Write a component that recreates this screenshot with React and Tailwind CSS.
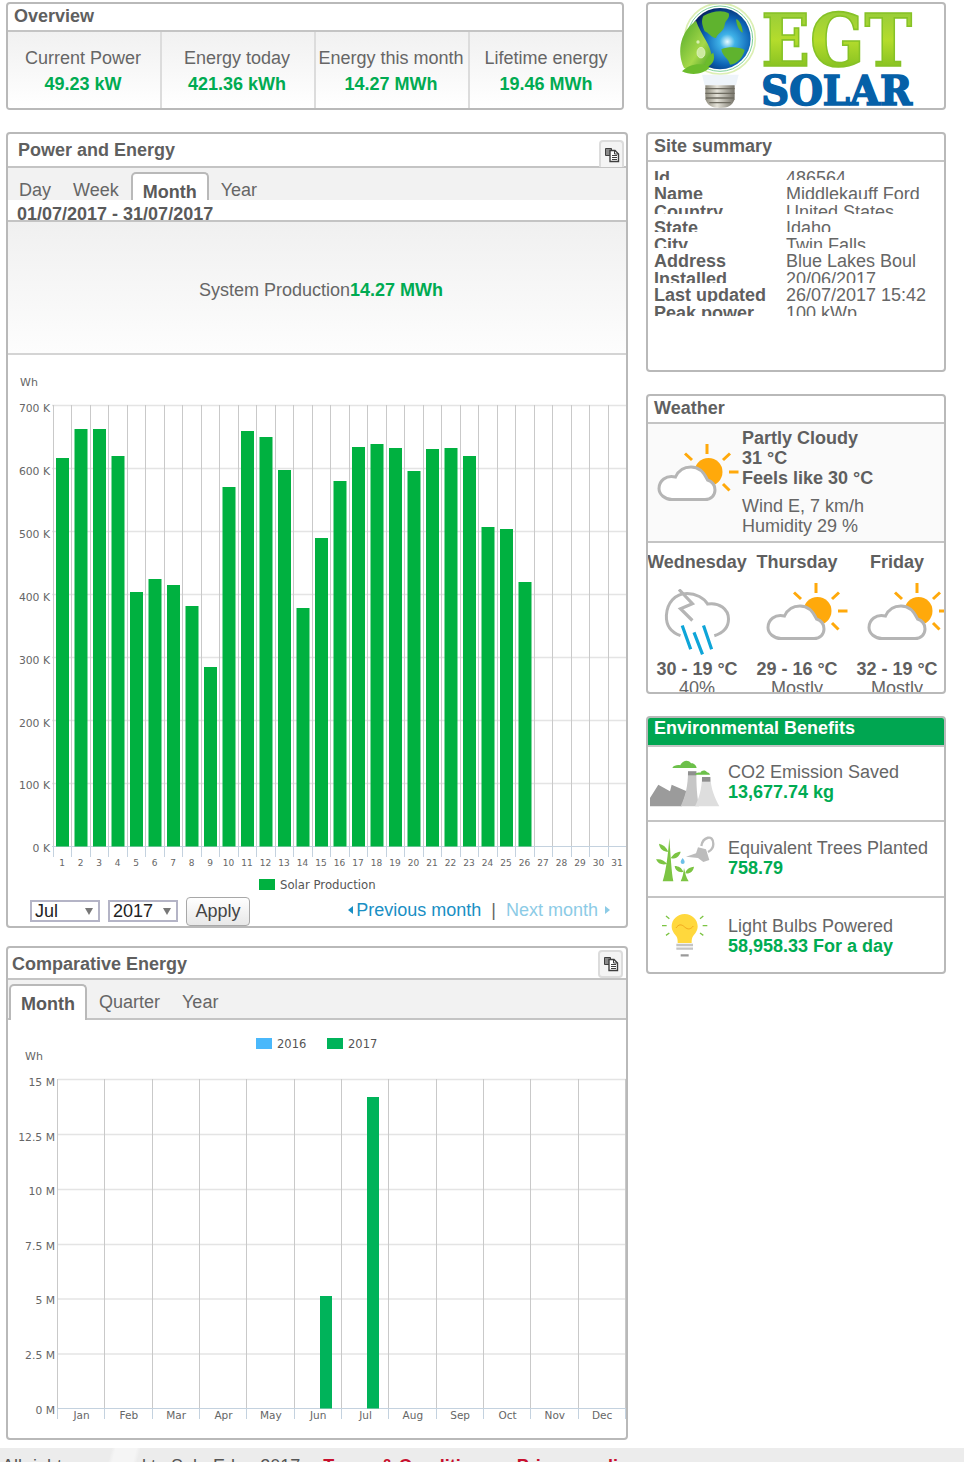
const dayBars = [458, 429, 429, 456, 592, 579, 585, 606, 667, 487, 431, 437, 470, 608, 538, 481, 447, 444, 448, 471, 449, 448, 456, 527, 529, 582];
const months = ['Jan', 'Feb', 'Mar', 'Apr', 'May', 'Jun', 'Jul', 'Aug', 'Sep', 'Oct', 'Nov', 'Dec'];

const stats = [
  { label: 'Current Power', value: '49.23 kW' },
  { label: 'Energy today', value: '421.36 kWh' },
  { label: 'Energy this month', value: '14.27 MWh' },
  { label: 'Lifetime energy', value: '19.46 MWh' },
];

const summary = [
  { label: 'Id', value: '486564', box: 'h-[11px] mb-[5px]' },
  { label: 'Name', value: 'Middlekauff Ford', box: 'h-[14px] mb-[4px]' },
  { label: 'Country', value: 'United States', box: 'h-[11px] mb-[5px]' },
  { label: 'State', value: 'Idaho', box: 'h-[13px] mb-[4px]' },
  { label: 'City', value: 'Twin Falls', box: 'h-[12px] mb-[4px]' },
  { label: 'Address', value: 'Blue Lakes Boul', box: 'h-[15px] mb-[3px]' },
  { label: 'Installed', value: '20/06/2017', box: 'h-[13px] mb-[3px]' },
  { label: 'Last updated', value: '26/07/2017 15:42', box: 'h-[16px] mb-[2px]' },
  { label: 'Peak power', value: '100 kWp', box: 'h-[12px]' },
];

function ExportButton({ className }) {
  return (
    <div className={`absolute flex w-[25px] items-center justify-center rounded-t-[4px] border-2 border-[#dcdcdc] bg-[#f4f4f4] ${className}`}>
      <svg width="16" height="16" viewBox="0 0 16 16" fill="none" stroke="#3f3f3f">
        <path d="M1.5 1.5h6v7h-6z" fill="#8a8a8a" />
        <path d="M6 3.5h5l3.5 3.5v7.5H6z" fill="#fff" strokeWidth="1.4" />
        <path d="M8 8.5h5M8 10.5h5M8 12.5h5M10.5 3.5v3.5h4" strokeWidth="1" />
      </svg>
    </div>
  );
}

function Panel({ className, children }) {
  return <div className={`relative overflow-hidden rounded-[4px] border-2 border-[#b9b9b9] bg-white ${className}`}>{children}</div>;
}

function Tabs({ items, active, className }) {
  return (
    <div className={`flex items-end bg-[#f2f2f2] text-[18px] text-[#666] ${className}`}>
      {items.map((tab) =>
        tab.name === active ? (
          <div key={tab.name} className={`rounded-t-[5px] border-2 border-b-0 border-[#b9b9b9] bg-white pl-[10px] pr-[10px] pt-[7px] font-bold leading-[22px] text-[#5a5a5a] ${tab.gap} ${tab.h}`}>
            {tab.name}
          </div>
        ) : (
          <div key={tab.name} className={`leading-[22px] ${tab.gap} ${tab.pb}`}>{tab.name}</div>
        )
      )}
    </div>
  );
}

function ProductionChart() {
  const hLines = [405.5, 468.5, 531.5, 594.5, 657.5, 720.5, 783.5];
  const vLines = Array.from({ length: 32 }, (_, i) => Math.round(52.5 + 18.5 * i) + 0.5);
  return (
    <svg className="block h-[540px] w-[618px]" viewBox="8 355 618 540" fontFamily="'DejaVu Sans', sans-serif">
      {hLines.map((y) => <line key={y} x1="52" x2="626" y1={y} y2={y} stroke="#e4e4e4" strokeWidth="1.3" />)}
      {vLines.map((x) => <line key={x} x1={x} x2={x} y1="405" y2="846" stroke="#c9c9c9" />)}
      {vLines.map((x) => <line key={x} x1={x} x2={x} y1="846" y2="857" stroke="#c4d2df" />)}
      <line x1="52" x2="626" y1="846.5" y2="846.5" stroke="#c4d2df" />
      {dayBars.map((top, i) => <rect key={i} x={56 + 18.5 * i} y={top} width="13" height={846.5 - top} fill="#00b140" />)}
      <text x="20" y="386" fontSize="11" fill="#666">Wh</text>
      {['700 K', '600 K', '500 K', '400 K', '300 K', '200 K', '100 K', '0 K'].map((t, i) => (
        <text key={t} x="50" y={412 + 62.9 * i} fontSize="10.8" fill="#666" textAnchor="end">{t}</text>
      ))}
      {Array.from({ length: 31 }, (_, i) => (
        <text key={i} x={62 + 18.5 * i} y="866" fontSize="9" fill="#666" textAnchor="middle">{i + 1}</text>
      ))}
      <rect x="259" y="879" width="16" height="11" fill="#00b140" />
      <text x="280" y="889" fontSize="11.7" fill="#555">Solar Production</text>
    </svg>
  );
}

function ComparativeChart() {
  const step = 47.33;
  const hLines = [1079.5, 1134.5, 1189.5, 1244.5, 1299, 1354];
  const vLines = Array.from({ length: 13 }, (_, i) => Math.round(58 + step * i) - 0.5);
  return (
    <svg className="block h-[418px] w-[618px]" viewBox="8 1020 618 418" fontFamily="'DejaVu Sans', sans-serif">
      {hLines.map((y) => <line key={y} x1="58" x2="626" y1={y} y2={y} stroke="#e4e4e4" strokeWidth="1.3" />)}
      {vLines.map((x) => <line key={x} x1={x} x2={x} y1="1079" y2="1408" stroke="#c9c9c9" />)}
      {vLines.map((x) => <line key={x} x1={x} x2={x} y1="1408" y2="1419" stroke="#c4d2df" />)}
      <line x1="58" x2="626" y1="1408.5" y2="1408.5" stroke="#c4d2df" />
      <rect x="320" y="1296" width="12" height="112.5" fill="#00b35a" />
      <rect x="367" y="1097" width="12" height="311.5" fill="#00b35a" />
      <rect x="256" y="1038" width="16" height="11" fill="#4ab8fb" />
      <text x="277" y="1048" fontSize="11.5" fill="#555">2016</text>
      <rect x="327" y="1038" width="16" height="11" fill="#00b35a" />
      <text x="348" y="1048" fontSize="11.5" fill="#555">2017</text>
      <text x="25" y="1060" fontSize="11" fill="#666">Wh</text>
      {['15 M', '12.5 M', '10 M', '7.5 M', '5 M', '2.5 M', '0 M'].map((t, i) => (
        <text key={t} x="55" y={1086 + 54.6 * i} fontSize="10.8" fill="#666" textAnchor="end">{t}</text>
      ))}
      {months.map((m, i) => (
        <text key={m} x={81.5 + step * i} y="1419" fontSize="10.5" fill="#666" textAnchor="middle">{m}</text>
      ))}
    </svg>
  );
}

function Logo() {
  return (
    <svg className="block h-[104px] w-[296px]" viewBox="24 12 888 312">
      <defs>
        <radialGradient id="globe" cx="0.62" cy="0.55" r="0.62">
          <stop offset="0" stopColor="#e8fbff" />
          <stop offset="0.2" stopColor="#3fb2e8" />
          <stop offset="0.62" stopColor="#0c62b4" />
          <stop offset="1" stopColor="#051f5c" />
        </radialGradient>
        <linearGradient id="egt" x1="0" x2="0" y1="0" y2="1">
          <stop offset="0" stopColor="#8cc63f" />
          <stop offset="0.5" stopColor="#b4dc2c" />
          <stop offset="1" stopColor="#6fb31c" />
        </linearGradient>
        <linearGradient id="leaf" x1="0" x2="1" y1="0" y2="1">
          <stop offset="0" stopColor="#4fa828" />
          <stop offset="0.6" stopColor="#a6d94a" />
          <stop offset="1" stopColor="#3d9a22" />
        </linearGradient>
        <linearGradient id="screw" x1="0" x2="1" y1="0" y2="0">
          <stop offset="0" stopColor="#8d8a7c" />
          <stop offset="0.4" stopColor="#e4e2d8" />
          <stop offset="1" stopColor="#77746a" />
        </linearGradient>
      </defs>
      <path d="M186 224h110l-8 32h-94z" fill="#eef4fa" />
      <path d="M196 256h88v42c-8 20-20 26-44 26s-36-6-44-26z" fill="url(#screw)" />
      <path d="M196 266h88M196 280h88M198 294h84M208 308h64" stroke="#6e6b60" strokeWidth="4" />
      <circle cx="240" cy="116" r="106" fill="none" stroke="#dcefb4" strokeWidth="5" />
      <circle cx="240" cy="116" r="98" fill="#fff" stroke="#7ccf9a" strokeWidth="3" />
      <circle cx="240" cy="116" r="92" fill="url(#globe)" />
      <path d="M190 48c24-14 58-20 76-8 6 14-10 20-12 34-2 22-20 22-26 40-14 0-22-16-34-20-6-16-12-30-4-46zM244 148c24-10 56-6 70 2-6 24-22 42-44 44-4-18-24-26-26-46zM288 58c10 0 20 22 20 40-10-4-18-20-20-40z" fill="#5fb32e" />
      <path d="M168 62C124 92 108 150 132 204c40 14 82 4 84-30-2-40-34-70-48-112z" fill="url(#leaf)" />
      <ellipse cx="183" cy="158" rx="12" ry="16" fill="#cdeaa0" stroke="#e9f7d2" strokeWidth="2" />
      <circle cx="174" cy="126" r="5" fill="#d8f0b0" />
      <path d="M126 214c22-22 58-28 84-12-20 22-56 26-84 12zM196 204c-4-20 6-34 24-46 6 20 0 36-24 46z" fill="#6cbc2c" />
      <text x="364" y="197" fontFamily="'DejaVu Serif', serif" fontWeight="700" fontSize="216" textLength="452" lengthAdjust="spacingAndGlyphs" fill="url(#egt)" stroke="#86c226" strokeWidth="5">EGT</text>
      <text x="364" y="315" fontFamily="'DejaVu Serif', serif" fontWeight="700" fontSize="124" textLength="452" lengthAdjust="spacingAndGlyphs" fill="#0560a8" stroke="#0560a8" strokeWidth="5">SOLAR</text>
    </svg>
  );
}

function PartlyCloudy({ className }) {
  return (
    <svg className={`block h-[60px] w-[84px] shrink-0 ${className}`} viewBox="0 0 84 60" fill="none">
      <circle cx="52.5" cy="29" r="14" fill="#ffa90b" />
      <path d="M51 1v10M29 10.5l7 6.5M74 10.5l-7 6.5M73 29h9.500M67 41l6.500 6.500" stroke="#ffa90b" strokeWidth="3" />
      <path d="M16 56.500H49c6 0 10-4 10-9.500 0-5-3-8.500-7.500-10C48 29 42 24 35 24c-8 0-13 4.500-15.500 10C10 31.500 3 38 3 45.500 3 51.500 9 56.500 16 56.500z" fill="#fff" stroke="#b5b5b5" strokeWidth="3" />
    </svg>
  );
}

function StormCloud() {
  return (
    <svg className="block h-[70px] w-[75px] shrink-0" viewBox="0 0 75 70" fill="none">
      <path d="M20.500 46.700C10 43 6 35 6.400 26.400 7 14 15 4.500 27 4.500c9 0 17 4.500 20.600 10.500C59 13 68.500 20 68.500 30c0 8-5.500 14-14.200 16.700" stroke="#b5b5b5" strokeWidth="3" />
      <path d="M19 .5 32.400 14.600 20.500 19.700 32.400 31.500" stroke="#b5b5b5" strokeWidth="3.200" />
      <path d="M22.200 36.500 30.700 60.200M34 43.300 42.500 65.300M43.500 36.500 51.600 60.200" stroke="#0ea5d8" strokeWidth="3.200" />
    </svg>
  );
}

function FactoryIcon() {
  return (
    <svg className="block h-[60px] w-[80px] shrink-0" viewBox="24 130 240 180">
      <path d="M30 290v-25l25-40 35 20 5-20 45 20-15 45z" fill="#9b9b9b" />
      <path d="M122 290c14-30 22-60 22-105h25c0 45 2 75 8 105z" fill="#c6c6c6" />
      <path d="M144 185h25v12h-25z" fill="#8f8f8f" />
      <path d="M165 290c12-25 20-50 21-88h25c2 38 14 63 27 88z" fill="#dedede" />
      <path d="M186 202h25v14h-25z" fill="#8f8f8f" />
      <path d="M97 175c4-8 16-10 24-8 4-12 22-20 32-6 8-2 16 6 17 14zM165 195c2-6 10-8 16-6 4-8 16-8 20-1 4 0 8 3 9 7z" fill="#6cc04a" />
    </svg>
  );
}

function TreeIcon() {
  return (
    <svg className="block h-[60px] w-[80px] shrink-0" viewBox="24 360 240 180">
      <path d="M68 514c10-30 16-80 20-130 4 50 6 100 12 130z" fill="#7cc443" />
      <path d="M85 425c-6-14-16-22-28-24 2 16 14 24 28 24zM92 445c8-14 18-20 30-20-4 16-16 22-30 20zM82 462c-10-12-20-16-34-14 6 14 18 18 34 14zM122 514c6-12 8-24 10-40 4 16 6 28 14 40z" fill="#7cc443" />
      <path d="M130 486c-4-12-14-18-26-18 2 14 12 20 26 18zM136 490c2-12 12-18 26-20-2 14-12 22-26 20z" fill="#7cc443" />
      <path d="M138 440l30-10 6-18 24 6 10 32-18 6-16-12z" fill="#bcbcbc" />
      <path d="M184 408c4-26 36-38 36-6 0 14-8 20-16 24" fill="none" stroke="#bcbcbc" strokeWidth="7" />
      <path d="M128 444c-5 7-6 10-6 12a6 6 0 0 0 12 0c0-2-1-5-6-12z" fill="#6cc0e8" />
    </svg>
  );
}

function BulbIcon() {
  return (
    <svg className="block h-[60px] w-[80px] shrink-0" viewBox="24 590 240 180" fill="none">
      <path d="M134 608c-22 0-39 17-39 37 0 14 8 22 14 30 4 6 4 14 4 20h42c0-6 0-14 4-20 6-8 14-16 14-30 0-20-17-37-39-37z" fill="#ffd83d" />
      <path d="M108 650c8-12 16-12 26-3s18 7 26-3" stroke="#f3a91e" strokeWidth="3" />
      <path d="M109 701h50M109 712h50" stroke="#c4c4c4" strokeWidth="7" />
      <path d="M122 732h24" stroke="#9a9a9a" strokeWidth="7" />
      <path d="M66 643h14M188 643h14M78 614l10 8M190 614l-10 8M78 672l10-7M190 672l-10-7" stroke="#7cc443" strokeWidth="4" />
    </svg>
  );
}

function Stat({ label, value, last }) {
  return (
    <div className={`pt-[15px] text-center ${last ? '' : 'border-r-2 border-[#dcdcdc] pr-[2px]'}`}>
      <div className="whitespace-nowrap text-[18px] leading-[22px] text-[#666]">{label}</div>
      <div className="mt-[4px] text-[18px] font-bold leading-[22px] text-[#00ab52]">{value}</div>
    </div>
  );
}

function Forecast({ day, temp, note, children, iconClass }) {
  return (
    <div className="flex w-[100px] shrink-0 flex-col items-center">
      <div className="text-[18px] font-bold leading-[20px] text-[#5f5f5f]">{day}</div>
      <div className={`h-[87px] self-start ${iconClass}`}>{children}</div>
      <div className="text-[18px] font-bold leading-[20px] text-[#5f5f5f]">{temp}</div>
      <div className="text-[18px] leading-[19px] text-[#666]">{note}</div>
    </div>
  );
}

function Benefit({ icon, label, value, box, textTop }) {
  return (
    <div className={`flex ${box}`}>
      {icon}
      <div className={textTop}>
        <div className="text-[18px] leading-[20px] text-[#666]">{label}</div>
        <div className="text-[18px] font-bold leading-[20px] text-[#00ab52]">{value}</div>
      </div>
    </div>
  );
}

export default function App() {
  return (
    <div className="h-[1462px] overflow-hidden bg-white font-['Liberation_Sans',Arial,sans-serif]">
      <div className="flex pl-[6px] pt-[2px]">
        {/* left column */}
        <div className="w-[622px]">
          <Panel className="h-[108px] w-[618px]">
            <div className="h-[28px] border-b-2 border-[#c4c4c4] pl-[6px] text-[18px] font-bold leading-[25px] text-[#5f5f5f]">Overview</div>
            <div className="grid h-[76px] grid-cols-[154px_154px_154px_152px] bg-linear-to-b from-[#f1f1f1] to-white">
              {stats.map((s, i) => <Stat key={s.label} {...s} last={i === 3} />)}
            </div>
          </Panel>

          <Panel className="mt-[22px] h-[796px]">
            <div className="h-[34px] border-b-2 border-[#c4c4c4] pl-[10px] text-[18px] font-bold leading-[32px] text-[#5f5f5f]">Power and Energy</div>
            <ExportButton className="right-[2px] top-[6px] h-[27px] border-b-0" />
            <Tabs
              className="h-[32px] pl-[11px]"
              active="Month"
              items={[
                { name: 'Day', gap: '-mb-[1px]', pb: '' },
                { name: 'Week', gap: 'ml-[22px] -mb-[1px]', pb: '' },
                { name: 'Month', gap: 'ml-[12px]', h: 'h-[28px]' },
                { name: 'Year', gap: 'ml-[12px] -mb-[1px]', pb: '' },
              ]}
            />
            <div className="h-[22px] border-b-2 border-[#c4c4c4] pl-[9px] text-[18px] font-bold leading-[28px] text-[#5a5a5a]">01/07/2017 - 31/07/2017</div>
            <div className="flex h-[133px] items-center justify-center border-b-2 border-[#d4d4d4] bg-linear-to-b from-[#f0f0f0] to-[#fdfdfd] pl-[8px] pt-[5px] text-[18px] text-[#666]">
              System Production<span className="font-bold text-[#00ab52]">14.27 MWh</span>
            </div>
            <ProductionChart />
            <div className="flex items-start pl-[22px] text-[18px]">
              <div className="mt-[5px] flex h-[22px] w-[70px] items-center justify-between border-2 border-[#b4b4c6] pl-[3px] pr-[5px] leading-none text-[#222]">
                Jul<span className="h-0 w-0 border-x-[4.5px] border-t-[7px] border-x-transparent border-t-[#777]" />
              </div>
              <div className="ml-[8px] mt-[5px] flex h-[22px] w-[70px] items-center justify-between border-2 border-[#b4b4c6] pl-[3px] pr-[5px] leading-none text-[#222]">
                2017<span className="h-0 w-0 border-x-[4.5px] border-t-[7px] border-x-transparent border-t-[#777]" />
              </div>
              <div className="ml-[8px] mt-[2px] flex h-[29px] w-[64px] items-center justify-center rounded-[4px] border border-[#a8a8a8] bg-linear-to-b from-white to-[#e8e8e8] text-[#444]">Apply</div>
              <div className="ml-auto mt-[4px] flex items-center pr-[16px] leading-[22px]">
                <span className="mr-[3px] h-0 w-0 border-y-[4.5px] border-r-[5px] border-y-transparent border-r-[#1a8fc4]" />
                <span className="text-[#1a8fc4]">Previous month</span>
                <span className="mx-[10px] text-[#666]">|</span>
                <span className="text-[#8ccbe6]">Next month</span>
                <span className="ml-[7px] h-0 w-0 border-y-[4.5px] border-l-[5px] border-y-transparent border-l-[#8ccbe6]" />
              </div>
            </div>
          </Panel>

          <Panel className="mt-[18px] h-[494px]">
            <div className="h-[32px] border-b-2 border-[#c4c4c4] pl-[4px] text-[18px] font-bold leading-[32px] text-[#5f5f5f]">Comparative Energy</div>
            <ExportButton className="right-[3px] top-[2px] h-[28px] rounded-b-[4px]" />
            <Tabs
              className="h-[40px] border-b-2 border-[#c4c4c4] pl-[1px]"
              active="Month"
              items={[
                { name: 'Month', gap: '-mb-[2px]', h: 'h-[36px]' },
                { name: 'Quarter', gap: 'ml-[12px]', pb: 'pb-[5px]' },
                { name: 'Year', gap: 'ml-[22px]', pb: 'pb-[5px]' },
              ]}
            />
            <ComparativeChart />
          </Panel>
        </div>

        {/* right column */}
        <div className="ml-[18px] w-[300px]">
          <Panel className="h-[108px]">
            <Logo />
          </Panel>

          <Panel className="mt-[22px] h-[240px] bg-[#f2f2f2]">
            <div className="h-[28px] border-b-2 border-[#c4c4c4] pl-[6px] text-[18px] font-bold leading-[24px] text-[#5f5f5f]">Site summary</div>
            <div className="pl-[6px] pt-[7px] text-[18px] leading-[18px] text-[#666]">
              {summary.map((row) => (
                <div key={row.label} className={`flex overflow-hidden ${row.box}`}>
                  <div className="w-[132px] shrink-0 font-bold text-[#5f5f5f]">{row.label}</div>
                  <div>{row.value}</div>
                </div>
              ))}
            </div>
          </Panel>

          <Panel className="mt-[22px] h-[300px]">
            <div className="h-[28px] border-b-2 border-[#c4c4c4] pl-[6px] text-[18px] font-bold leading-[25px] text-[#5f5f5f]">Weather</div>
            <div className="flex h-[119px] border-b-2 border-[#c4c4c4] bg-[#fafafa]">
              <PartlyCloudy className="ml-[8px] mt-[19px]" />
              <div className="ml-[2px] pt-[4px] text-[18px] leading-[20px]">
                <div className="font-bold text-[#5f5f5f]">Partly Cloudy</div>
                <div className="font-bold text-[#5f5f5f]">31 °C</div>
                <div className="font-bold text-[#5f5f5f]">Feels like 30 °C</div>
                <div className="mt-[8px] text-[#666]">Wind E, 7 km/h</div>
                <div className="text-[#666]">Humidity 29 %</div>
              </div>
            </div>
            <div className="-ml-[1px] flex pt-[9px]">
              <Forecast day="Wednesday" temp="30 - 19 °C" note="40%" iconClass="ml-[13px] pt-[17px]"><StormCloud /></Forecast>
              <Forecast day="Thursday" temp="29 - 16 °C" note="Mostly" iconClass="ml-[18px] pt-[10px]"><PartlyCloudy /></Forecast>
              <Forecast day="Friday" temp="32 - 19 °C" note="Mostly" iconClass="ml-[19px] pt-[10px]"><PartlyCloudy /></Forecast>
            </div>
          </Panel>

          <Panel className="mt-[22px] h-[258px]">
            <div className="h-[29px] border-b-2 border-[#c4c4c4] bg-[#00a651] pl-[6px] text-[18px] font-bold leading-[20px] text-white">Environmental Benefits</div>
            <Benefit icon={<div className="pt-[6px]"><FactoryIcon /></div>} label="CO2 Emission Saved" value="13,677.74 kg" box="h-[75px] border-b-2 border-[#c4c4c4]" textTop="pt-[15px]" />
            <Benefit icon={<div className="pt-[8px]"><TreeIcon /></div>} label="Equivalent Trees Planted" value="758.79" box="h-[76px] border-b-2 border-[#c4c4c4]" textTop="pt-[16px]" />
            <Benefit icon={<div className="pt-[10px]"><BulbIcon /></div>} label="Light Bulbs Powered" value="58,958.33 For a day" box="h-[74px]" textTop="pt-[18px]" />
          </Panel>
        </div>
      </div>

      <div className="mt-[8px] h-[14px] overflow-hidden bg-[linear-gradient(105deg,#ececec_0,#ececec_108px,#f5f5f5_112px,#f5f5f5_132px,#ececec_136px)] pl-[2px] pt-[8px] text-[18px] leading-[20px] text-[#555]">
        All rights reserved to SolarEdge 2017
        <span className="ml-[23px] font-bold text-[#c8102e]">Terms &amp; Conditions</span>
        <span className="ml-[24px] font-bold text-[#c8102e]">Privacy policy</span>
      </div>
    </div>
  );
}
